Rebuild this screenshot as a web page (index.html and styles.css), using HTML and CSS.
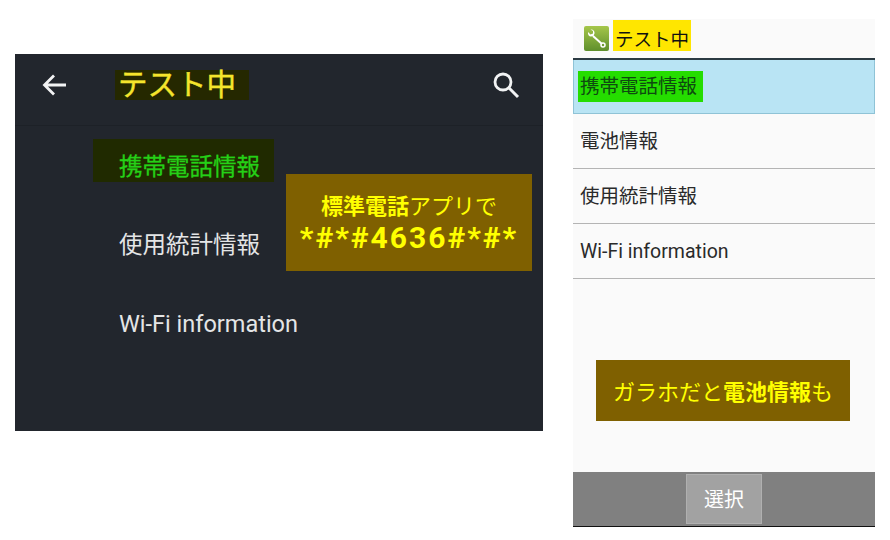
FILE: index.html
```html
<html>
  <head>
    <title>テスト中</title>
    <link rel="stylesheet" href="styles.css">
  </head>
  <body>
    <div class="smart">
      <div class="smart-head">
        <svg class="back" width="28" height="28" viewBox="0 0 28 28">
          <path d="M26 14H5M14 4.500L4.500 14L14 23.500" fill="none" stroke="#f2f3f4" stroke-width="2.800"/>
        </svg>
        <span class="smart-title">テスト中</span>
        <svg class="search" width="30" height="30" viewBox="0 0 30 30">
          <circle cx="12" cy="12" r="8" fill="none" stroke="#f2f3f4" stroke-width="2.800"/>
          <path d="M18 18L27 27" fill="none" stroke="#f2f3f4" stroke-width="3"/>
        </svg>
      </div>
      <div class="smart-list">
        <div class="smart-row first"><span class="smart-mark">携帯電話情報</span></div>
        <div class="smart-row">使用統計情報</div>
        <div class="smart-row">Wi-Fi information</div>
      </div>
      <div class="note note-smart">
        <div><b>標準電話</b>アプリで</div>
        <div class="code">*#*#4636#*#*</div>
      </div>
    </div>

    <div class="garaho">
      <div class="garaho-head">
        <svg class="tool" width="25" height="25" viewBox="0 0 25 25">
          <defs>
            <linearGradient id="toolbg" x1="0" y1="0" x2="0" y2="1">
              <stop offset="0" stop-color="#a5c64a"/>
              <stop offset="1" stop-color="#5f8f2c"/>
            </linearGradient>
          </defs>
          <rect x="0" y="0" width="25" height="25" rx="2" fill="url(#toolbg)"/>
          <path d="M9 10L18 18" stroke="#fff" stroke-width="2"/>
          <path d="M4 6L6.500 8.500L9 7.500L9 5L6.500 3.500C9 3 11 5 10.500 7.500L9.500 10L7 10.500C5 10.500 3.500 8.500 4 6Z" fill="#fff"/>
          <circle cx="19" cy="19" r="2" fill="none" stroke="#fff" stroke-width="1.500"/>
        </svg>
        <span class="garaho-title">テスト中</span>
      </div>
      <div class="garaho-row selected"><span class="garaho-mark">携帯電話情報</span></div>
      <div class="garaho-row">電池情報</div>
      <div class="garaho-row">使用統計情報</div>
      <div class="garaho-row">Wi-Fi information</div>
      <div class="garaho-space">
        <div class="note note-garaho">ガラホだと<b>電池情報</b>も</div>
      </div>
      <div class="garaho-foot">
        <div class="select">選択</div>
      </div>
    </div>
  </body>
</html>
```

FILE: styles.css
```css
body {
  margin: 0;
  width: 890px;
  height: 540px;
  background: #fff;
  display: flex;
  align-items: flex-start;
  font-family: "Roboto", "Noto Sans CJK JP", sans-serif;
  overflow: hidden;
}

/* left: smartphone */
.smart {
  position: relative;
  width: 528px;
  height: 377px;
  margin: 54px 0 0 15px;
  background: #22262d;
  color: #e4e5e6;
}

.smart-head {
  display: flex;
  align-items: center;
  box-sizing: border-box;
  height: 72px;
  padding: 0 7px 9px 25px;
  border-bottom: 1px solid #1d2127;
}

.back {
  margin-right: 47px;
}

.smart-title {
  padding: 0 13px 0 3px;
  height: 30px;
  line-height: 30px;
  font-size: 29.500px;
  color: #f5e52c;
  background: #252800;
  -webkit-text-stroke: 0.4px #f5e52c;
}

.search {
  margin-left: auto;
  margin-right: 15px;
}

.smart-list {
  padding: 13px 0 0 78px;
  font-size: 23.500px;
}

.smart-row {
  height: 79px;
  line-height: 79px;
  padding-left: 26px;
}

.smart-row.first {
  height: 67px;
  line-height: 43px;
  padding-left: 0;
}

.smart-mark {
  display: inline-block;
  box-sizing: border-box;
  height: 43px;
  padding: 7px 14px 0 26px;
  color: #25d017;
  background: #202a00;
  -webkit-text-stroke: 0.3px #25d017;
}

/* callouts */
.note {
  position: absolute;
  background: #7f6000;
  color: #ffff00;
  font-family: "Noto Sans CJK JP", sans-serif;
  text-align: center;
}

.note-smart {
  left: 271px;
  top: 120px;
  width: 246px;
  height: 97px;
  padding-top: 15px;
  box-sizing: border-box;
  font-size: 22px;
  line-height: 30px;
}

.code {
  font-family: "Roboto", sans-serif;
  font-size: 30px;
  font-weight: 700;
  letter-spacing: 2px;
  line-height: 38px;
  white-space: nowrap;
}

/* right: feature phone */
.garaho {
  display: flex;
  flex-direction: column;
  width: 302px;
  height: 508px;
  margin: 19px 0 0 30px;
  background: #fafafa;
  color: #2a2a2a;
  font-size: 19.500px;
}

.garaho-head {
  display: flex;
  align-items: center;
  height: 39px;
  padding-left: 11px;
  border-bottom: 2px solid #2b3a42;
  box-sizing: content-box;
}

.tool {
  margin: 0 4px 0 0;
}

.garaho-title {
  width: 78px;
  height: 31px;
  line-height: 40px;
  margin-bottom: 7px;
  padding-left: 2px;
  box-sizing: border-box;
  font-size: 18.500px;
  color: #111;
  background: #ffe600;
}

.garaho-row {
  height: 54px;
  line-height: 56px;
  padding-left: 7px;
  border-bottom: 1px solid #b4b4b4;
}

.garaho-row.selected {
  display: flex;
  align-items: center;
  padding-left: 4px;
  background: #b9e4f4;
  border: 1px solid #8fc3d6;
  border-top: 0;
  box-sizing: border-box;
}

.garaho-mark {
  height: 31px;
  line-height: 31px;
  padding: 0 6px 0 2px;
  background: #25dd00;
  color: #0e4a10;
}

.garaho-space {
  position: relative;
  flex: 1;
}

.note-garaho {
  left: 23px;
  top: 81px;
  width: 254px;
  height: 61px;
  line-height: 61px;
  font-size: 22px;
  white-space: nowrap;
}

.garaho-foot {
  display: flex;
  justify-content: center;
  height: 55px;
  background: #808080;
  border-bottom: 1px solid #111;
  box-sizing: border-box;
  padding: 2px 0 2px 0;
}

.select {
  width: 76px;
  line-height: 51px;
  background: #a2a2a2;
  border: 1px solid #b0b0b0;
  box-sizing: border-box;
  color: #fff;
  text-align: center;
  font-size: 20px;
}
```
